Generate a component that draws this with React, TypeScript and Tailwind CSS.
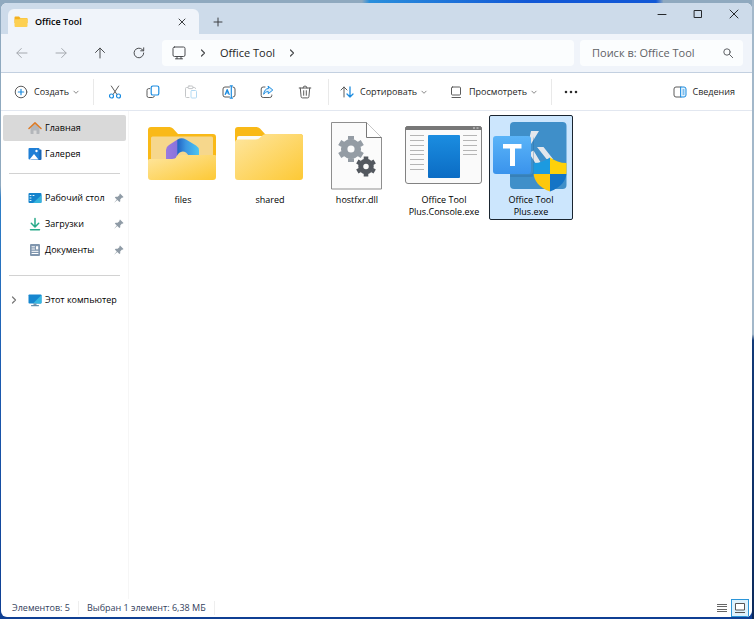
import { useState } from "react";
import type { ReactNode } from "react";

/* ------------------------------------------------------------------ */
/*  Small icons                                                       */
/* ------------------------------------------------------------------ */

const GRAY = "#5c5c5c";
const BLUE = "#1c8ce0";

interface IconProps {
  children: ReactNode;
  size?: string;
  color?: string;
}

function Icon({ children, size = "size-[14px]", color = GRAY }: IconProps) {
  return (
    <svg
      viewBox="0 0 14 14"
      className={`${size} shrink-0`}
      fill="none"
      stroke={color}
      strokeLinecap="round"
      strokeLinejoin="round"
      aria-hidden="true"
    >
      {children}
    </svg>
  );
}

const MiniFolder = () => (
  <Icon color="none">
    <path d="M.5 2.5a1 1 0 0 1 1-1H5l1.500 1.500H12.500a1 1 0 0 1 1 1V8H.5z" fill="#f4b01e" />
    <path d="M.5 5.300a1 1 0 0 1 1-1h3.700l1.300-1H12.500a1 1 0 0 1 1 1v6.700a1 1 0 0 1-1 1h-11a1 1 0 0 1-1-1z" fill="#fdd052" />
  </Icon>
);

const BackIcon = () => (
  <Icon color="#a4a8ae">
    <path d="M12 7H2M6.300 2.500 1.800 7l4.500 4.500" />
  </Icon>
);

const ForwardIcon = () => (
  <Icon color="#a4a8ae">
    <path d="M2 7h10M7.700 2.500 12.200 7l-4.500 4.500" />
  </Icon>
);

const UpIcon = () => (
  <Icon color="#4b4d50">
    <path d="M7 12V2.200M2.500 6.500 7 2l4.500 4.500" />
  </Icon>
);

const RefreshIcon = () => (
  <Icon color="#4b4d50">
    <path d="M11.700 7a4.800 4.800 0 1 1-1.500-3.500l1.300 1.200M11.700 1.800v3h-3" />
  </Icon>
);

const MonitorIcon = () => (
  <Icon color="#4b4d50">
    <rect x="1" y="1" width="12" height="9.500" rx="1.500" />
    <path d="M5 10.700v2M9 10.700v2M3.500 12.800h7" />
  </Icon>
);

const ChevronRight = ({ color = "#4b4d50" }: { color?: string }) => (
  <Icon color={color}>
    <path d="M5.500 4 8.500 7l-3 3" strokeWidth="1.200" />
  </Icon>
);

const ChevronDown = () => (
  <Icon size="size-[10px]" color="#808080">
    <path d="M4 5.800 7 8.800l3-3" strokeWidth="1.300" />
  </Icon>
);

const SearchIcon = () => (
  <Icon color="#5f6266">
    <circle cx="6" cy="6" r="3.200" />
    <path d="m8.500 8.500 3.200 3.200" />
  </Icon>
);

const NewIcon = () => (
  <Icon>
    <circle cx="7" cy="7" r="5.800" />
    <path d="M7 4.300v5.400M4.300 7h5.400" stroke={BLUE} strokeWidth="1.200" />
  </Icon>
);

const CutIcon = () => (
  <Icon>
    <path d="m3.300 1 5.600 8.400M10.700 1 5.100 9.400" />
    <circle cx="3.500" cy="11" r="2" stroke={BLUE} strokeWidth="1.200" />
    <circle cx="10.500" cy="11" r="2" stroke={BLUE} strokeWidth="1.200" />
  </Icon>
);

const CopyIcon = () => (
  <Icon>
    <path d="M3.800 3.600H2.700A1.700 1.700 0 0 0 1 5.300v5.500a1.700 1.700 0 0 0 1.700 1.700h4a1.700 1.700 0 0 0 1.600-1.300" />
    <rect x="5.200" y="1" width="7.600" height="9" rx="1.600" stroke={BLUE} strokeWidth="1.200" />
  </Icon>
);

const PasteIcon = () => (
  <Icon color="#c4c6c8">
    <path d="M5 12.500H2.500a1 1 0 0 1-1-1v-8a1 1 0 0 1 1-1H4M9 2.500h1.500a1 1 0 0 1 1 1" />
    <rect x="4" y="1" width="5" height="2.600" rx="1" />
    <rect x="7" y="5.500" width="5.500" height="7.500" rx="1" stroke="#b4daf3" />
  </Icon>
);

const RenameIcon = () => (
  <Icon>
    <path d="M7.500 2H3a2 2 0 0 0-2 2v6a2 2 0 0 0 2 2h4.500M11 2a2 2 0 0 1 2 2v6a2 2 0 0 1-2 2" />
    <path d="M3.200 9.500 5.200 4.500l2 5M3.900 8h2.600M9.300.8v12.400M8.200.8h2.200M8.200 13.200h2.200" stroke={BLUE} strokeWidth="1.200" />
  </Icon>
);

const ShareIcon = () => (
  <Icon>
    <path d="M5 2H3.200a2 2 0 0 0-2 2v6.500a2 2 0 0 0 2 2h6.600a2 2 0 0 0 2-2V10" />
    <path d="M8.300 1.300 12.800 5 8.300 8.700V6.600C6 6.600 4.800 7.500 3.700 9.300 4 5.800 5.600 3.700 8.300 3.400z" stroke={BLUE} fill="#dff0fc" />
  </Icon>
);

const TrashIcon = () => (
  <Icon>
    <path d="M1.200 3h11.600M5 3a2 2 0 0 1 4 0M2.300 3l.8 8.700a1.300 1.300 0 0 0 1.300 1.200h5.200a1.300 1.300 0 0 0 1.300-1.200L11.700 3M5.700 5.700v4.600M8.300 5.700v4.600" />
  </Icon>
);

const SortIcon = () => (
  <Icon>
    <path d="M4 12V2M1 5l3-3 3 3" />
    <path d="M10 2v10M7 9l3 3 3-3" stroke={BLUE} strokeWidth="1.300" />
  </Icon>
);

const ViewIcon = () => (
  <Icon>
    <rect x="2.500" y="2" width="9" height="8" rx="1" />
    <path d="M3 12.500h8.500" />
  </Icon>
);

const DetailsIcon = () => (
  <Icon>
    <path d="M8 2H3a2 2 0 0 0-2 2v6a2 2 0 0 0 2 2h5" />
    <path d="M8 2h3a2 2 0 0 1 2 2v6a2 2 0 0 1-2 2H8zM10 5h1M10 7h1M10 9h1" stroke={BLUE} fill="#e2f2fd" />
  </Icon>
);

const PinIcon = () => (
  <svg viewBox="0 0 12 12" className="size-3 shrink-0" fill="#8f9ba6" aria-hidden="true">
    <path d="M7 1.500 10.500 5l-.8.700-.7-.1-1.800 1.900.1 1.700-.9.800L4.300 8 1.500 10.600 1.300 10.400 3.800 7.500 1.800 5.500l.8-.8 2 .1 2-1.800-.2-.8z" />
  </svg>
);

/* ------------------------------------------------------------------ */
/*  Sidebar icons                                                     */
/* ------------------------------------------------------------------ */

const HomeIcon = () => (
  <Icon color="none">
    <path d="M2.500 7 7 2.800 11.500 7v5.300a.7.7 0 0 1-.7.7H8.500V9.500h-3V13H3.200a.7.7 0 0 1-.7-.7z" fill="#b3b6ba" />
    <path d="M1 7.500 7 1.900l6 5.600" stroke="#dd7b26" strokeWidth="1.500" />
  </Icon>
);

const GalleryIcon = () => (
  <Icon color="none">
    <rect x="3" y="2.500" width="10.500" height="10.500" rx="1" fill="#1a67b5" />
    <rect x=".5" y="1" width="11" height="11.500" rx="1" fill="#1f7fd6" />
    <path d="M1.500 12.500 6 7l4.500 5.500z" fill="#fff" />
    <circle cx="8.500" cy="4" r="1.200" fill="#fff" />
  </Icon>
);

const DesktopIcon = () => (
  <Icon color="none">
    <rect x=".5" y="2" width="13" height="10" rx="1" fill="#1583cc" />
    <path d="M5 12 13.500 4v7a1 1 0 0 1-1 1z" fill="#35b3dc" />
    <path d="M2 4.500h1M2 7h1M2 9.500h1M5 4.500h1" stroke="#e4f6ff" />
  </Icon>
);

const DownloadIcon = () => (
  <Icon color="#2aaa8a">
    <path d="M7 1.500v8M3.300 6.300 7 10l3.700-3.700M2.500 12.700h9" strokeWidth="1.500" />
  </Icon>
);

const DocumentIcon = () => (
  <Icon color="none">
    <rect x="2" y="1" width="10" height="12" rx="1" fill="#8096ae" />
    <path d="M4 3.800h2.500M4 6h2.500M4 8.300h6M4 10.500h6" stroke="#fff" />
    <rect x="8" y="3.200" width="2.200" height="3.200" fill="#fff" />
  </Icon>
);

const ComputerIcon = () => (
  <Icon color="none">
    <rect x=".5" y="1.500" width="13" height="9" rx=".8" fill="#1686cf" />
    <path d="M5 10.500 13.500 2v7.700a.8.8 0 0 1-.8.8z" fill="#36b8e2" />
    <path d="M5.500 10.500h3v1.700h-3z" fill="#7e99ad" />
    <path d="M3.500 12.700h7" stroke="#41789c" />
  </Icon>
);

/* ------------------------------------------------------------------ */
/*  File thumbnails                                                   */
/* ------------------------------------------------------------------ */

function Thumb({ children }: { children: ReactNode }) {
  return (
    <svg viewBox="0 0 80 72" className="h-[72px] w-20 shrink-0" aria-hidden="true">
      {children}
    </svg>
  );
}

const FolderGradient = ({ id }: { id: string }) => (
  <defs>
    <linearGradient id={id} x1="0" y1="0" x2="1" y2="1">
      <stop offset="0" stopColor="#fee6a0" />
      <stop offset="1" stopColor="#fdc935" />
    </linearGradient>
  </defs>
);

const FilesThumb = () => (
  <Thumb>
    <FolderGradient id="filesFront" />
    <defs>
      <linearGradient id="loop" x1="0" y1="0" x2="1" y2="0">
        <stop offset="0" stopColor="#9a7be0" />
        <stop offset=".32" stopColor="#8a73dc" />
        <stop offset=".36" stopColor="#2266c4" />
        <stop offset=".6" stopColor="#3c96e2" />
        <stop offset="1" stopColor="#4cc6f2" />
      </linearGradient>
    </defs>
    <path d="M5 10a3 3 0 0 1 3-3h18.500a5 5 0 0 1 3.500 1.500L35 14h35a3 3 0 0 1 3 3v32H5z" fill="#f9b917" />
    <rect x="8" y="16.500" width="62" height="32" rx="1.500" fill="#f6d78c" />
    <path
      d="M23 40V30a6 6 0 0 1 3-5l8.500-5.500a8 8 0 0 1 8.500 0L53 25.500a6 6 0 0 1 3 5V37H47l-4-4.500a6 6 0 0 0-7 .5l-3 4v3z"
      fill="url(#loop)"
    />
    <path d="M5 40.500a1.500 1.500 0 0 1 1.500-1.500H29c4 0 6-4 11-4h32a1 1 0 0 1 1 1v21a3 3 0 0 1-3 3H8a3 3 0 0 1-3-3z" fill="url(#filesFront)" />
  </Thumb>
);

const SharedThumb = () => (
  <Thumb>
    <FolderGradient id="sharedFront" />
    <path d="M5 10a3 3 0 0 1 3-3h18.500a5 5 0 0 1 3.500 1.500L35 14h35a3 3 0 0 1 3 3v32H5z" fill="#f9b917" />
    <path d="M7 18a2 2 0 0 1 2-2h24v6H7z" fill="#fbfbf8" />
    <path d="M5 22.500A3 3 0 0 1 8 19.500h17.500c5 0 6-5.500 11-5.500H70a3 3 0 0 1 3 3v40a3 3 0 0 1-3 3H8a3 3 0 0 1-3-3z" fill="url(#sharedFront)" />
  </Thumb>
);

// six-toothed wheel, drawn around its own centre
const Gear = ({ x, y, r, fill }: { x: number; y: number; r: number; fill: string }) => (
  <g transform={`translate(${x} ${y}) scale(${r / 12})`} fill="none" stroke={fill}>
    <circle r="6.300" strokeWidth="6" />
    <path
      d="M0-8.500V-12M0 8.500V12M-7.400-4.200-10.400-6M7.400 4.200 10.400 6M-7.400 4.200-10.400 6M7.400-4.200 10.400-6"
      strokeWidth="5.500"
    />
  </g>
);

const DllThumb = () => (
  <Thumb>
    <path d="M14.500 2.500h35l15 15v51.500h-50z" fill="#fbfbfb" stroke="#8f8f8f" />
    <path d="M49.500 2.500v15h15" fill="#fff" stroke="#777" />
    <Gear x={34} y={29} r={13} fill="#949ca4" />
    <Gear x={49} y={46.500} r={10} fill="#53585f" />
  </Thumb>
);

const ConsoleThumb = () => (
  <Thumb>
    <defs>
      <linearGradient id="consoleBody" x1="0" y1="0" x2="0" y2="1">
        <stop offset="0" stopColor="#1b8de0" />
        <stop offset="1" stopColor="#0b6cc4" />
      </linearGradient>
    </defs>
    <rect x="1.500" y="6.500" width="76" height="57" rx="2.500" fill="#fafafa" stroke="#828282" />
    <path d="M1.500 9.500v-1A2 2 0 0 1 3.500 6.500h72a2 2 0 0 1 2 2v1z" fill="#777" stroke="#777" />
    <path d="M69 8h2M72.500 8h2" stroke="#ddd" />
    <path
      d="M6 15.500h14M6 20.500h14M6 25.500h14M6 30.500h14M6 34.500h14M6 39.500h14M6 44.500h14M6 49.500h14M59 15.500h14M59 20.500h14M59 25.500h14M59 30.500h14M59 34.500h14"
      stroke="#b5b5b5"
    />
    <rect x="24" y="15" width="32" height="43" rx="1" fill="url(#consoleBody)" />
  </Thumb>
);

const OfficeThumb = () => (
  <Thumb>
    <defs>
      <linearGradient id="tile" x1="0" y1="0" x2="0" y2="1">
        <stop offset="0" stopColor="#5ab4f8" />
        <stop offset="1" stopColor="#3a93ec" />
      </linearGradient>
      <clipPath id="shield">
        <path d="M59 37.500c5 3.500 10 5.500 16.500 5.500v9c0 9-6 15.500-16.500 19.500C48.500 67.500 42.500 61 42.500 52v-9c6.500 0 11.500-2 16.500-5.500z" />
      </clipPath>
    </defs>
    <rect x="19" y="2" width="56.500" height="67" rx="4" fill="#3f8fc9" />
    <path d="M40 11h8L40 24l-2-4zM46 27h6.500L62 39h-6.500zM38 33l4.500-2.500L50 43l-5 1z" fill="#e3e7ec" />
    <path d="M19 54.500h20a3 3 0 0 0 3-3V16.500l1 2V54a3 3 0 0 1-3 3H19z" fill="#235f91" opacity=".3" />
    <rect x="2" y="16" width="38" height="38" rx="3" fill="url(#tile)" />
    <path d="M12 24h18.500v4.500h-6.500V46h-5V28.500h-7z" fill="#fff" />
    <g clipPath="url(#shield)">
      <path d="M42 37h17v17H42z" fill="#1c9ae0" />
      <path d="M59 37h17v17H59z" fill="#fed10a" />
      <path d="M42 54h17v18H42z" fill="#fcc70c" />
      <path d="M59 54h17v18H59z" fill="#1474c6" />
    </g>
  </Thumb>
);

/* ------------------------------------------------------------------ */
/*  Data                                                              */
/* ------------------------------------------------------------------ */

const tools = [
  { label: "Вырезать", icon: <CutIcon /> },
  { label: "Копировать", icon: <CopyIcon /> },
  { label: "Вставить", icon: <PasteIcon /> },
  { label: "Переименовать", icon: <RenameIcon /> },
  { label: "Поделиться", icon: <ShareIcon /> },
  { label: "Удалить", icon: <TrashIcon /> },
];

const files = [
  { name: "files", icon: <FilesThumb /> },
  { name: "shared", icon: <SharedThumb /> },
  { name: "hostfxr.dll", icon: <DllThumb /> },
  { name: "Office Tool Plus.Console.exe", icon: <ConsoleThumb /> },
  { name: "Office Tool Plus.exe", icon: <OfficeThumb /> },
];

/* ------------------------------------------------------------------ */
/*  Sections                                                          */
/* ------------------------------------------------------------------ */

function TitleBar() {
  return (
    <header className="flex h-[31px] shrink-0 items-end bg-[#cddbea] pl-[7px]">
      <div className="flex h-[25px] w-[191px] items-center rounded-t-md bg-[#f0f4fa] pr-2.5 pl-1.5 text-black">
        <MiniFolder />
        <h1 className="ml-[7px] flex-1 font-semibold">Office Tool</h1>
        <button aria-label="Закрыть вкладку">
          <Icon color="#3c3f42">
            <path d="m4 4 6 6M10 4l-6 6" />
          </Icon>
        </button>
      </div>
      <button aria-label="Новая вкладка" className="flex h-[25px] w-[38px] items-center justify-center">
        <Icon color="#3c3f42">
          <path d="M7 3v8M3 7h8" />
        </Icon>
      </button>
      <div className="ml-auto flex h-full pb-[9px]">
        <button aria-label="Свернуть" className="flex w-9 items-center justify-center">
          <Icon color="#26292c">
            <path d="M3 7.500h8" />
          </Icon>
        </button>
        <button aria-label="Развернуть" className="flex w-9 items-center justify-center">
          <Icon color="#26292c">
            <rect x="3.500" y="3.500" width="7" height="7" />
          </Icon>
        </button>
        <button aria-label="Закрыть" className="flex w-9 items-center justify-center">
          <Icon color="#26292c">
            <path d="m3 3 8 8M11 3l-8 8" />
          </Icon>
        </button>
      </div>
    </header>
  );
}

function NavBar() {
  const buttons = [
    { label: "Назад", icon: <BackIcon /> },
    { label: "Вперёд", icon: <ForwardIcon /> },
    { label: "Вверх", icon: <UpIcon /> },
    { label: "Обновить", icon: <RefreshIcon /> },
  ];

  return (
    <div className="flex shrink-0 border-b border-[#c3d0e0] bg-[#f0f4fa] py-1.5 pr-[9px] pl-0.5">
      <div className="flex gap-px">
        {buttons.map((b) => (
          <button key={b.label} aria-label={b.label} className="flex w-[38px] items-center justify-center">
            {b.icon}
          </button>
        ))}
      </div>
      <nav aria-label="Путь" className="ml-1 flex h-[26px] flex-1 items-center rounded bg-[#fbfdfe] pl-2.5">
        <MonitorIcon />
        <span className="ml-2.5">
          <ChevronRight />
        </span>
        <a href="#office-tool" className="mx-2.5 text-[11px] text-[#1f1f1f]">
          Office Tool
        </a>
        <ChevronRight />
      </nav>
      <label className="ml-1.5 flex h-[26px] w-[163px] items-center rounded bg-[#fbfdfe] pr-2 pl-3">
        <input
          type="search"
          aria-label="Поиск"
          placeholder="Поиск в: Office Tool"
          className="min-w-0 flex-1 bg-transparent text-[11px] outline-none placeholder:text-[#5f6266]"
        />
        <SearchIcon />
      </label>
    </div>
  );
}

const Separator = () => <div className="h-[26px] w-px bg-[#e9e9e9]" />;

interface MenuButtonProps {
  label: string;
  icon: ReactNode;
  className: string;
}

function MenuButton({ label, icon, className }: MenuButtonProps) {
  return (
    <button className={`flex items-center ${className}`}>
      {icon}
      <span className="mr-0.5 ml-1.5">{label}</span>
      <ChevronDown />
    </button>
  );
}

function CommandBar() {
  return (
    <div className="flex h-[38px] shrink-0 items-center border-b border-[#e2e7f0] bg-white pt-px pr-[17px] pl-[13px]">
      <MenuButton label="Создать" icon={<NewIcon />} className="w-[79px]" />
      <Separator />
      <div className="flex pr-1 pl-0.5">
        {tools.map((t) => (
          <button key={t.label} aria-label={t.label} className="flex h-[26px] w-[38px] items-center justify-center">
            {t.icon}
          </button>
        ))}
      </div>
      <Separator />
      <MenuButton label="Сортировать" icon={<SortIcon />} className="ml-[11px] w-[109px]" />
      <MenuButton label="Просмотреть" icon={<ViewIcon />} className="w-[102px]" />
      <Separator />
      <button aria-label="Подробнее" className="flex h-[26px] w-[38px] items-center justify-center">
        <Icon color="#2b2b2b">
          <path d="M2 7h.010M7 7h.010M12 7h.010" strokeWidth="2.600" />
        </Icon>
      </button>
      <button className="ml-auto flex items-center gap-[5px]">
        <DetailsIcon />
        <span>Сведения</span>
      </button>
    </div>
  );
}

interface NavItemProps {
  label: string;
  icon: ReactNode;
  active?: boolean;
  pinned?: boolean;
  expandable?: boolean;
}

function NavItem({ label, icon, active, pinned, expandable }: NavItemProps) {
  return (
    <a
      href="#"
      aria-current={active ? "page" : undefined}
      className={`mx-0.5 flex h-[26px] items-center rounded-xs pr-px whitespace-nowrap text-black ${active ? "bg-[#d9d9d9]" : ""}`}
    >
      <span className="flex w-[25px] shrink-0 pl-1">{expandable && <ChevronRight color="#777" />}</span>
      {icon}
      <span className="ml-[3px] flex-1">{label}</span>
      {pinned && <PinIcon />}
    </a>
  );
}

function Sidebar() {
  return (
    <nav aria-label="Область навигации" className="w-32 shrink-0 border-r border-[#f6f6f6] pt-1">
      <NavItem label="Главная" icon={<HomeIcon />} active />
      <NavItem label="Галерея" icon={<GalleryIcon />} />
      <hr className="mx-2 mt-1.5 mb-[11px] border-[#d2d2d2]" />
      <NavItem label="Рабочий стол" icon={<DesktopIcon />} pinned />
      <NavItem label="Загрузки" icon={<DownloadIcon />} pinned />
      <NavItem label="Документы" icon={<DocumentIcon />} pinned />
      <hr className="mx-2 mt-3 mb-[11px] border-[#d2d2d2]" />
      <NavItem label="Этот компьютер" icon={<ComputerIcon />} expandable />
    </nav>
  );
}

function StatusBar() {
  return (
    <footer className="flex h-[18px] shrink-0 items-center pr-[3px] pl-[11px] text-[#33415c]">
      <span className="border-r border-[#eeeeee] pr-2">Элементов: 5</span>
      <span className="border-r border-[#eeeeee] px-2">Выбран 1 элемент: 6,38 МБ</span>
      <div className="ml-auto flex">
        <button aria-label="Таблица" className="flex size-[18px] items-center justify-center">
          <svg viewBox="0 0 10 10" className="size-2.5" stroke="#666" aria-hidden="true">
            <path d="M0 1.500h10M0 3.500h10M0 6.500h10M0 8.500h10" />
          </svg>
        </button>
        <button
          aria-label="Крупные значки"
          className="flex size-[18px] items-center justify-center border border-[#2b95d8] bg-[#ddf1fc]"
        >
          <svg viewBox="0 0 10 10" className="size-2.5" stroke="#555" fill="#fff" aria-hidden="true">
            <path d="M.5.500h9v6.500h-9zM0 9.500h10" />
          </svg>
        </button>
      </div>
    </footer>
  );
}

/* ------------------------------------------------------------------ */
/*  App                                                               */
/* ------------------------------------------------------------------ */

export default function App() {
  const [selected, setSelected] = useState("Office Tool Plus.exe");

  return (
    <div className="h-screen bg-[linear-gradient(#8fa9bf_30%,#2f80c8_32%,#1c5bb0_60%,#0f3f93)] font-['Open_Sans','Noto_Sans',sans-serif] text-[9px] leading-3.5 text-[#1f1f1f]">
      <div className="h-full bg-[linear-gradient(90deg,#8fa9bf_48%,#2a8fdc_49%,#1258d6_70%,#1258d6_87%,#8fa9bf_88%)] bg-[length:100%_3px] bg-no-repeat">
        <div className="flex h-full flex-col bg-[linear-gradient(#a3b8ca_54%,#123a78_55%,#0c2a5c)] bg-[length:2px_100%] bg-right bg-no-repeat pt-[3px] pr-0.5 pb-0.5 pl-px">
          <div className="flex min-h-0 flex-1 flex-col overflow-hidden rounded-md bg-white">
            <TitleBar />
            <NavBar />
            <CommandBar />
            <div className="flex min-h-0 flex-1">
              <Sidebar />
              <main className="flex flex-1 flex-wrap content-start gap-[3px] pt-1 pl-3">
                {files.map((f) => (
                  <button
                    key={f.name}
                    aria-pressed={f.name === selected}
                    onClick={() => setSelected(f.name)}
                    className={`flex h-[105px] w-[84px] flex-col items-center rounded-xs border pt-1 leading-3 text-black ${
                      f.name === selected ? "border-[#1a2530] bg-[#cce6fd]" : "border-transparent"
                    }`}
                  >
                    {f.icon}
                    <span className="mt-0.5 px-1">{f.name}</span>
                  </button>
                ))}
              </main>
            </div>
            <StatusBar />
          </div>
        </div>
      </div>
    </div>
  );
}
